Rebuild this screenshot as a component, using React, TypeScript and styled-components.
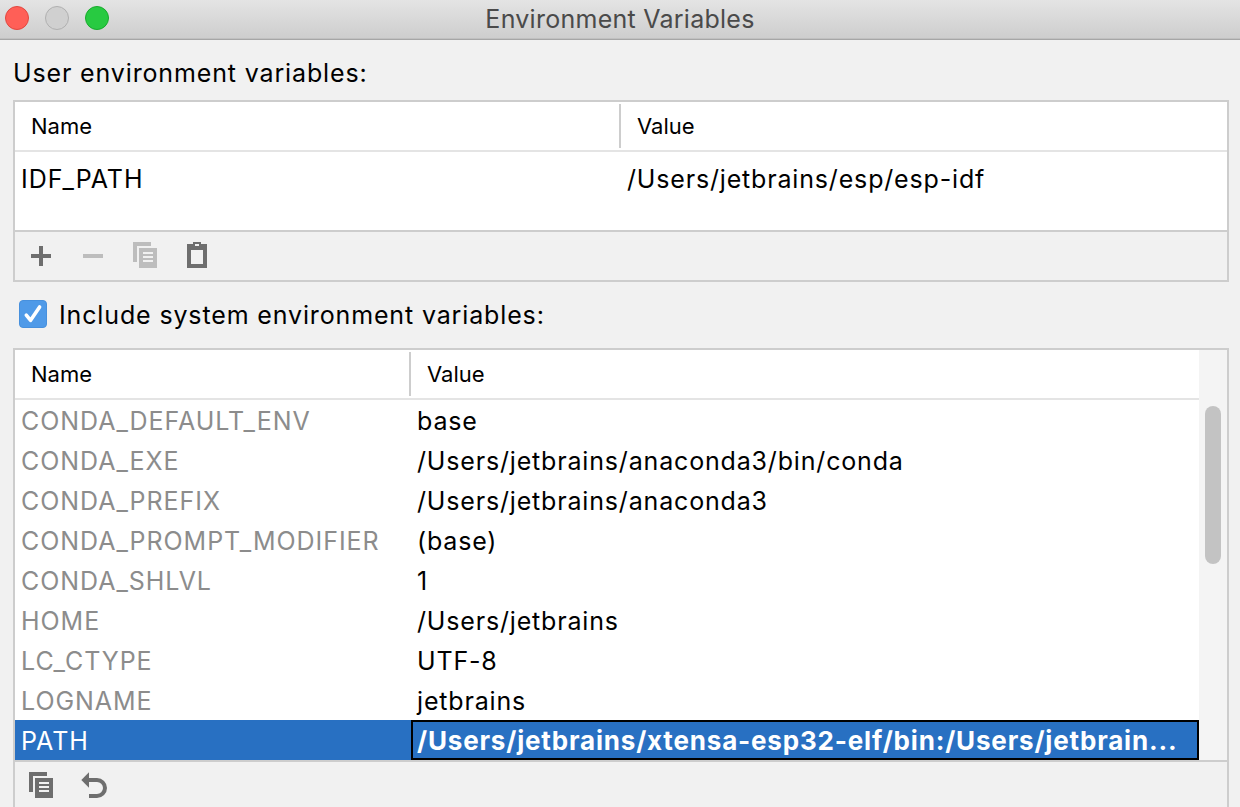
import React from "react";
import styled, { createGlobalStyle, css } from "styled-components";

const GlobalStyle = createGlobalStyle`
  * { box-sizing: border-box; }
  body {
    margin: 0;
    background: #f1f1f1;
    color: #000;
    font-family: Inter, "Liberation Sans", sans-serif;
    overflow: hidden;
  }
`;

const Window = styled.div`
  display: flex;
  flex-direction: column;
  width: 1240px;
  height: 807px;
  overflow: hidden;
  background: #f1f1f1;
`;

const TitleBar = styled.header`
  display: grid;
  grid-template-columns: 1fr auto 1fr;
  align-items: start;
  flex: none;
  height: 40px;
  padding: 0 5px;
  background: linear-gradient(#e4e4e4, #cdcdcd);
  border-bottom: 1px solid #a6a6a6;
  box-shadow: inset 0 -1px 0 #c0c0c0;
`;

const Lights = styled.div`
  display: flex;
  gap: 16px;
  padding-top: 6px;
`;

const Light = styled.span<{ $fill: string; $edge: string }>`
  width: 24px;
  height: 24px;
  border-radius: 50%;
  background: ${(p) => p.$fill};
  border: 1px solid ${(p) => p.$edge};
`;

const Title = styled.h1`
  margin: 0;
  font-size: 25px;
  line-height: 38px;
  font-weight: 400;
  letter-spacing: 0.26px;
  color: #4a4a4a;
`;

const Label = styled.label`
  display: flex;
  align-items: center;
  flex: none;
  font-size: 25px;
  letter-spacing: 0.86px;
  white-space: pre;
`;

const UserLabel = styled(Label)`
  height: 60px;
  padding: 6px 0 0 13px;
`;

const SystemLabel = styled(Label)`
  height: 66px;
  gap: 12px;
  padding-left: 19px;
`;

const Checkbox = styled.span`
  display: flex;
  width: 28px;
  height: 28px;
  margin-top: -2px;
  border-radius: 4px;
  background: #4f9ae8;
  border: 1px solid #4790dd;
`;

const Panel = styled.section`
  display: flex;
  flex-direction: column;
  flex: none;
  width: 1216px;
  margin-left: 13px;
  border: 2px solid #cdcdcd;
`;

const SystemPanel = styled(Panel)`
  height: 480px;
`;

const TableArea = styled.div`
  display: flex;
  background: #fff;
`;

const Table = styled.div`
  flex: 1;
  min-width: 0;
`;

const HeaderRow = styled.div`
  display: flex;
  height: 50px;
  padding: 2px 0;
  border-bottom: 2px solid #e4e4e4;
`;

const HeaderCell = styled.div<{ $width?: number }>`
  display: flex;
  align-items: center;
  height: 44px;
  padding: 0 0 1px 16px;
  font-size: 22px;
  letter-spacing: 0;
  ${(p) =>
    p.$width
      ? css`
          width: ${p.$width}px;
          border-right: 2px solid #cdcdcd;
        `
      : css`
          flex: 1;
        `}
`;

const Body = styled.div<{ $height: number; $top: number }>`
  height: ${(p) => p.$height}px;
  padding-top: ${(p) => p.$top}px;
`;

const Row = styled.div<{ $selected?: boolean }>`
  display: flex;
  height: 40px;
  font-size: 25px;
  line-height: 42px;
  white-space: nowrap;
  background: ${(p) => (p.$selected ? "#2870c2" : "transparent")};
`;

const NameCell = styled.div<{ $width: number; $color: string }>`
  width: ${(p) => p.$width}px;
  padding-left: 6px;
  letter-spacing: 0.95px;
  color: ${(p) => p.$color};
`;

const ValueCell = styled.div<{ $selected?: boolean }>`
  flex: 1;
  min-width: 0;
  padding-left: 6px;
  letter-spacing: 0.83px;
  ${(p) =>
    p.$selected &&
    css`
      padding-left: 4px;
      border: 2px solid #000;
      font-size: 26px;
      line-height: 38px;
      font-weight: 700;
      letter-spacing: 0.82px;
      color: #fff;
    `}
`;

const ScrollTrack = styled.div`
  width: 28px;
  padding: 56px 6px 0;
  background: #f4f4f4;
`;

const ScrollThumb = styled.div`
  width: 16px;
  height: 158px;
  border-radius: 8px;
  background: #c3c3c3;
`;

const Toolbar = styled.div`
  display: flex;
  height: 50px;
  padding: 8px 0 0 12px;
  gap: 24px;
  border-top: 2px solid #cdcdcd;
`;

const Icon = styled.svg<{ $disabled?: boolean }>`
  width: 28px;
  height: 28px;
  color: ${(p) => (p.$disabled ? "#bdbdbd" : "#6e6e6e")};
`;

const CopyIcon = ({ disabled }: { disabled?: boolean }) => (
  <Icon viewBox="0 0 28 28" $disabled={disabled} fill="currentColor" shapeRendering="crispEdges">
    <path d="M2 2h18v4H6v16H2z" />
    <path
      fillRule="evenodd"
      d="M8 8h18v20H8zM12 12v2h10v-2zM12 16v2h10v-2zM12 20v2h10v-2z"
    />
  </Icon>
);

const AddIcon = () => (
  <Icon viewBox="0 0 28 28" fill="currentColor" shapeRendering="crispEdges">
    <path d="M12 6h4v8h8v4h-8v8h-4v-8H4v-4h8z" />
  </Icon>
);

const RemoveIcon = () => (
  <Icon viewBox="0 0 28 28" $disabled fill="currentColor" shapeRendering="crispEdges">
    <path d="M4 14h20v4H4z" />
  </Icon>
);

const PasteIcon = () => (
  <Icon viewBox="0 0 28 28" fill="currentColor" shapeRendering="crispEdges">
    <path
      fillRule="evenodd"
      d="M10 2h8v2h6v24H4V4h6zM12 4v2h4V4zM8 10v14h12V10z"
    />
  </Icon>
);

const UndoIcon = () => (
  <Icon viewBox="0 0 28 28">
    <path d="M10 2.3V17.7L2.3 10z" fill="currentColor" />
    <path d="M9.5 10H18a8 8 0 0 1 0 16H10" fill="none" stroke="currentColor" strokeWidth="4" />
  </Icon>
);

const systemVars: [string, string][] = [
  ["CONDA_DEFAULT_ENV", "base"],
  ["CONDA_EXE", "/Users/jetbrains/anaconda3/bin/conda"],
  ["CONDA_PREFIX", "/Users/jetbrains/anaconda3"],
  ["CONDA_PROMPT_MODIFIER", "(base)"],
  ["CONDA_SHLVL", "1"],
  ["HOME", "/Users/jetbrains"],
  ["LC_CTYPE", "UTF-8"],
  ["LOGNAME", "jetbrains"],
  ["PATH", "/Users/jetbrains/xtensa-esp32-elf/bin:/Users/jetbrain..."],
];

export default function App() {
  return (
    <>
      <GlobalStyle />
      <Window>
        <TitleBar>
          <Lights>
            <Light $fill="#ff5f57" $edge="#e2473f" />
            <Light $fill="#d0d0d0" $edge="#b0b0b0" />
            <Light $fill="#28ca41" $edge="#17ab2c" />
          </Lights>
          <Title>Environment Variables</Title>
        </TitleBar>

        <UserLabel>User environment variables:</UserLabel>
        <Panel>
          <TableArea>
            <Table>
              <HeaderRow>
                <HeaderCell $width={606}>Name</HeaderCell>
                <HeaderCell>Value</HeaderCell>
              </HeaderRow>
              <Body $height={78} $top={6}>
                <Row>
                  <NameCell $width={606} $color="#000">IDF_PATH</NameCell>
                  <ValueCell>/Users/jetbrains/esp/esp-idf</ValueCell>
                </Row>
              </Body>
            </Table>
          </TableArea>
          <Toolbar>
            <AddIcon />
            <RemoveIcon />
            <CopyIcon disabled />
            <PasteIcon />
          </Toolbar>
        </Panel>

        <SystemLabel>
          <Checkbox>
            <svg width="26" height="26" viewBox="0 0 26 26" fill="none">
              <path
                d="M6.3 14.2L10.6 19.3L19.6 6"
                stroke="#fff"
                strokeWidth="3.6"
                strokeLinecap="round"
                strokeLinejoin="round"
              />
            </svg>
          </Checkbox>
          Include system environment variables:
        </SystemLabel>
        <SystemPanel>
          <TableArea>
            <Table>
              <HeaderRow>
                <HeaderCell $width={396}>Name</HeaderCell>
                <HeaderCell>Value</HeaderCell>
              </HeaderRow>
              <Body $height={360} $top={0}>
                {systemVars.map(([name, value]) => {
                  const selected = name === "PATH";
                  return (
                    <Row key={name} $selected={selected}>
                      <NameCell $width={396} $color={selected ? "#fff" : "#8c8c8c"}>
                        {name}
                      </NameCell>
                      <ValueCell $selected={selected}>{value}</ValueCell>
                    </Row>
                  );
                })}
              </Body>
            </Table>
            <ScrollTrack>
              <ScrollThumb />
            </ScrollTrack>
          </TableArea>
          <Toolbar>
            <CopyIcon />
            <UndoIcon />
          </Toolbar>
        </SystemPanel>
      </Window>
    </>
  );
}
